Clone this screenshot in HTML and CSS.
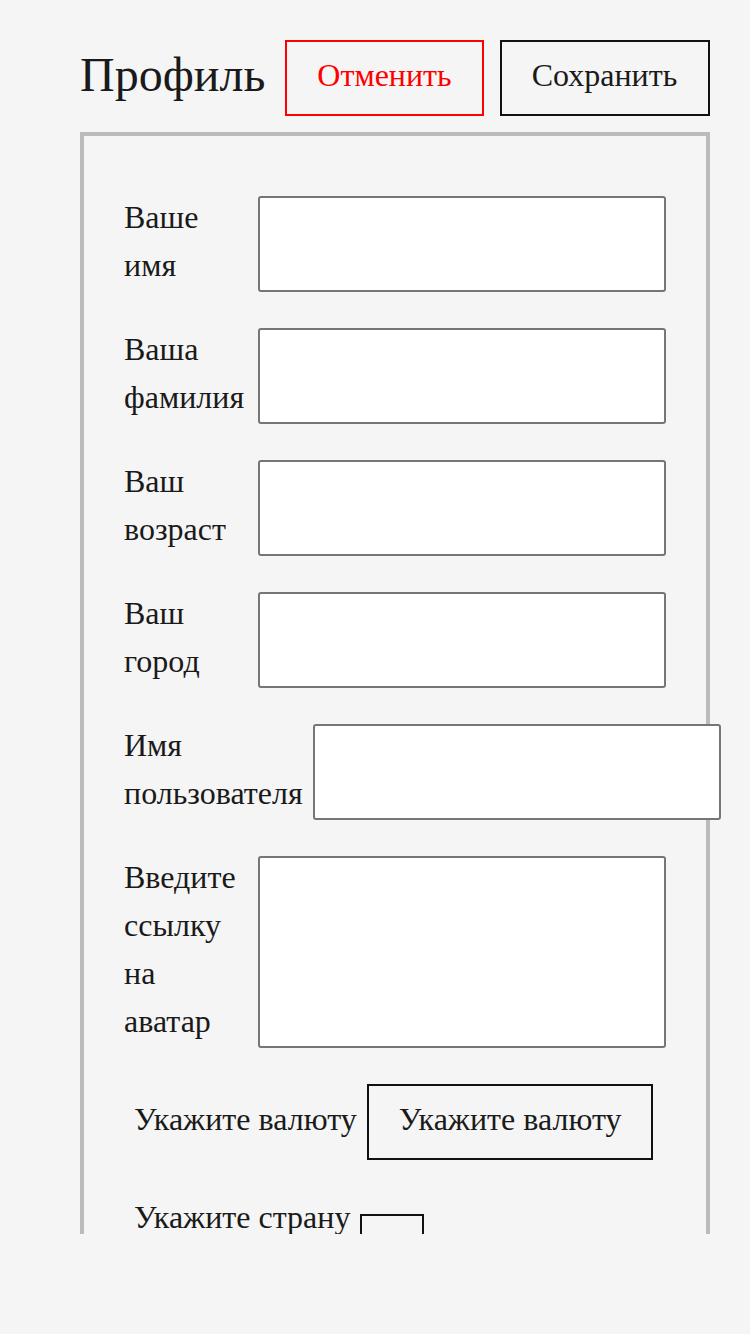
FILE: index.html
```html
<!DOCTYPE html>
<html lang="ru">
<head>
    <meta charset="UTF-8">
    <meta name="viewport" content="width=device-width, initial-scale=1.0">
    <title>Профиль</title>
    <link rel="stylesheet" href="styles.css">
</head>
<body>
    <div class="page">
        <div class="header">
            <h1>Профиль</h1>
            <button class="btn cancel-btn">Отменить</button>
            <button class="btn">Сохранить</button>
        </div>
        <form class="profile-form">
            <div class="form-row">
                <label for="first-name">Ваше имя</label>
                <input type="text" id="first-name">
            </div>
            <div class="form-row">
                <label for="last-name">Ваша фамилия</label>
                <input type="text" id="last-name">
            </div>
            <div class="form-row">
                <label for="age">Ваш возраст</label>
                <input type="text" id="age">
            </div>
            <div class="form-row">
                <label for="city">Ваш город</label>
                <input type="text" id="city">
            </div>
            <div class="form-row">
                <label for="username">Имя пользователя</label>
                <input type="text" id="username">
            </div>
            <div class="form-row">
                <label for="avatar">Введите ссылку на аватар</label>
                <textarea id="avatar"></textarea>
            </div>
            <div class="choice-row">
                <span class="choice-label">Укажите валюту</span>
                <button type="button" class="btn">Укажите валюту</button>
            </div>
            <div class="choice-row country-row">
                <span class="choice-label">Укажите страну</span>
                <button type="button" class="btn empty-btn"></button>
            </div>
        </form>
    </div>
</body>
</html>
```

FILE: styles.css
```css
html, body {
    margin: 0;
    background-color: #f5f5f5;
}
body {
    font-family: "Liberation Serif", "Times New Roman", serif;
    color: #1a1a1a;
}
.page {
    height: 1234px;
    overflow: hidden;
    padding: 40px 40px 0 80px;
    box-sizing: border-box;
}
.header {
    display: flex;
    align-items: center;
    margin-bottom: 16px;
}
h1 {
    font-size: 48px;
    font-weight: normal;
    margin: 0 20px 0 0;
    line-height: 70px;
    padding-bottom: 6px;
}
.btn {
    font-family: inherit;
    font-size: 32px;
    line-height: 36px;
    padding: 15px 30px 21px;
    background: transparent;
    color: #1a1a1a;
    border: 2px solid #111;
    cursor: pointer;
}
.header .btn + .btn {
    margin-left: 16px;
    padding-right: 31px;
}
.cancel-btn {
    color: #ff0000;
    border-color: #ff0000;
}
.profile-form {
    border: 4px solid #bbb;
    padding: 60px 40px;
}
.form-row {
    display: flex;
    gap: 10px;
    margin-bottom: 36px;
}
.form-row label {
    font-size: 32px;
    line-height: 48px;
    flex: 1 1 auto;
    width: 0;
    min-width: min-content;
    margin-top: -3px;
    padding-bottom: 3px;
}
.form-row input,
.form-row textarea {
    flex: 0 0 408px;
    box-sizing: border-box;
    border: 2px solid #767676;
    border-radius: 3px;
    background: #fff;
    font-family: inherit;
    font-size: 32px;
    resize: none;
}
.choice-row {
    display: flex;
    align-items: center;
    gap: 10px;
    margin: 0 0 36px 10px;
}
.choice-label {
    font-size: 32px;
    line-height: 48px;
    padding-bottom: 6px;
}
.country-row {
    align-items: flex-start;
}
.country-row .choice-label {
    margin-top: -3px;
}
.empty-btn {
    width: 64px;
    height: 76px;
    margin-top: 18px;
    padding: 0;
}
```
